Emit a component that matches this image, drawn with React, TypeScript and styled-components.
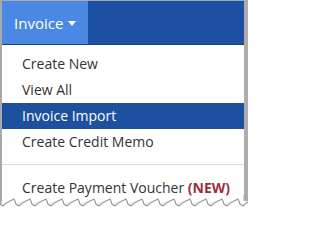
import React from "react";
import styled, { createGlobalStyle } from "styled-components";

const Global = createGlobalStyle`
  html, body { margin: 0; padding: 0; background: #ffffff; }
  body { font-family: "Open Sans", "Liberation Sans", sans-serif; }
`;

const Page = styled.div`
  width: 248px;
  height: 211px;
  overflow: hidden;
  background: #ffffff;
  display: flex;
  flex-direction: column;
`;

const Panel = styled.div`
  width: 248px;
  box-sizing: border-box;
  height: 201px;
  border-top: 1px solid #a9a9a9;
  border-left: 2px solid #a9a9a9;
  border-right: 4px solid #adadad;
  background: #ffffff;
  display: flex;
  flex-direction: column;
`;

const Header = styled.div`
  height: 47px;
  display: flex;
  background: #1d50a2;
  border-bottom: 1px solid #123f86;
`;

const Tab = styled.div`
  width: 86px;
  box-sizing: border-box;
  padding-left: 12px;
  background: #4a88e4;
  color: #ffffff;
  font-size: 15px;
  display: flex;
  align-items: center;
  gap: 5px;
`;

const Caret = styled.span`
  width: 0;
  height: 0;
  border-left: 4px solid transparent;
  border-right: 4px solid transparent;
  border-top: 5px solid #ffffff;
  margin-top: 1px;
`;

const Menu = styled.div`
  padding-top: 6px;
  display: flex;
  flex-direction: column;
`;

const Item = styled.div<{ $active?: boolean }>`
  height: 26px;
  line-height: 26px;
  padding-left: 20px;
  font-size: 14px;
  color: ${(p) => (p.$active ? "#ffffff" : "#333333")};
  background: ${(p) => (p.$active ? "#1e50a0" : "transparent")};
  white-space: nowrap;
`;

const Divider = styled.div`
  height: 1px;
  background: #dcdcdc;
  margin: 9px 0 10px;
`;

const New = styled.span`
  color: #9c2f3b;
  font-weight: 700;
`;

const Tear = styled.svg`
  display: block;
  margin-top: -6px;
`;

function tearPath() {
  let d = "M0 9";
  for (let x = 0; x < 250; x += 16) {
    d += ` L${x + 3} 11 L${x + 6} 8 L${x + 14} 4 L${x + 16} 9`;
  }
  return d;
}

export default function App() {
  return (
    <>
      <Global />
      <Page>
        <Panel>
          <Header>
            <Tab>
              Invoice
              <Caret />
            </Tab>
          </Header>
          <Menu>
            <Item>Create New</Item>
            <Item>View All</Item>
            <Item $active>Invoice Import</Item>
            <Item>Create Credit Memo</Item>
            <Divider />
            <Item>
              Create Payment Voucher <New>(NEW)</New>
            </Item>
          </Menu>
        </Panel>
        <Tear width="248" height="14" viewBox="0 0 248 14">
          <path d="M0 0 L0 9" stroke="#a9a9a9" strokeWidth="3" fill="none" />
          <path d="M245 0 L245 6" stroke="#adadad" strokeWidth="3" fill="none" />
          <path d={tearPath()} stroke="#9a9a9a" strokeWidth="1.2" fill="none" />
        </Tear>
      </Page>
    </>
  );
}
